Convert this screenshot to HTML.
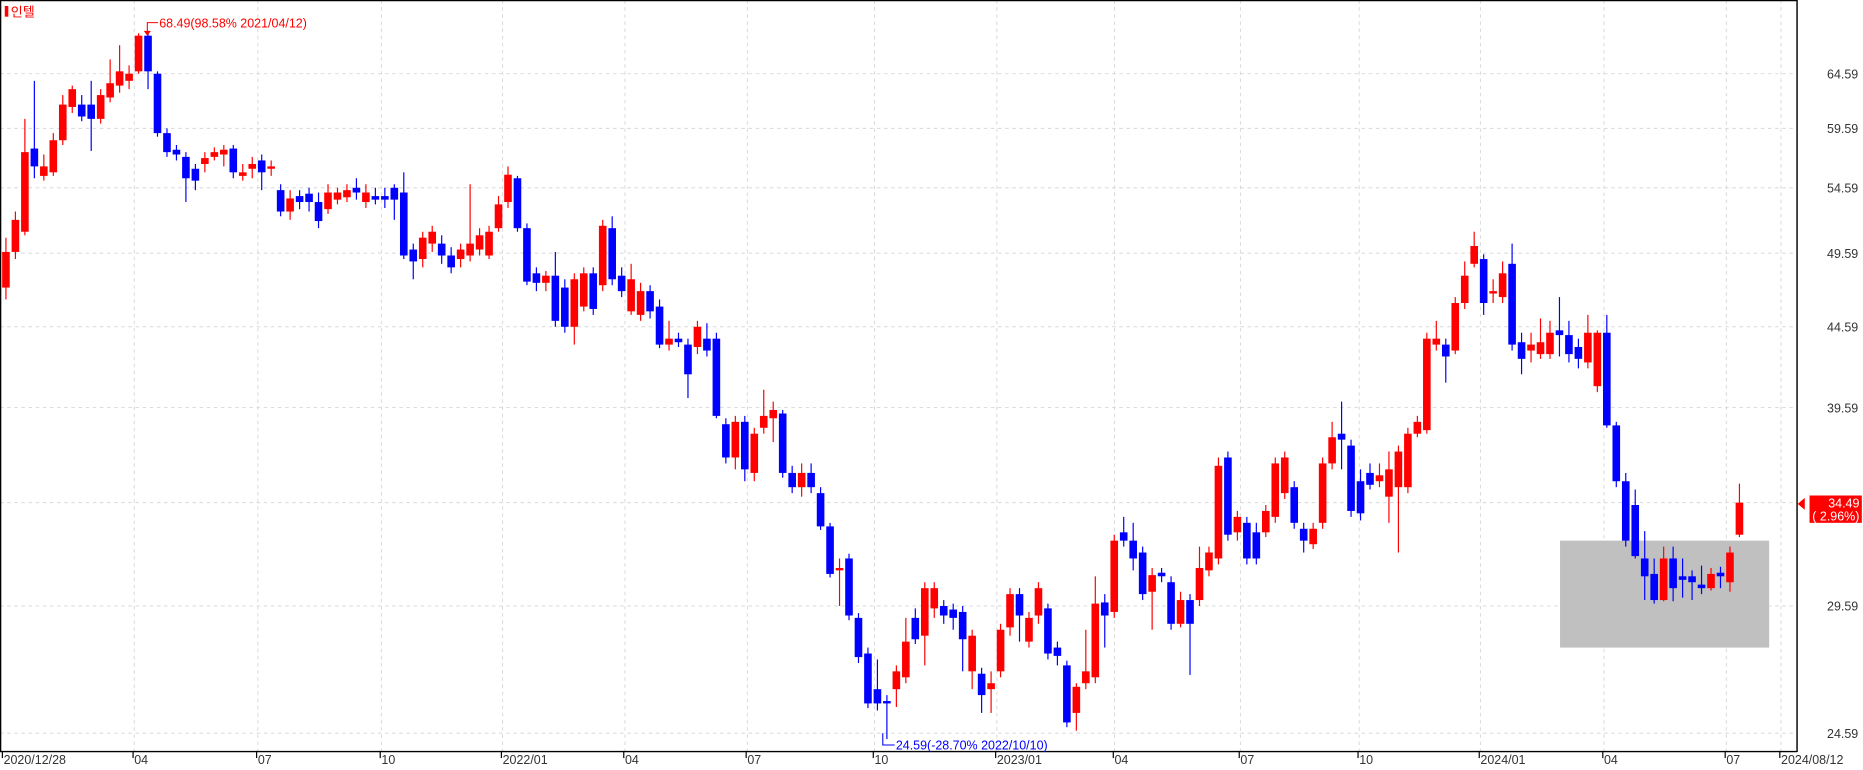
<!DOCTYPE html>
<html><head><meta charset="utf-8">
<style>
html,body{margin:0;padding:0;background:#fff;overflow:hidden}
svg{display:block}
text{font-family:"Liberation Sans","Noto Sans CJK KR",sans-serif}
</style></head><body>
<svg id="c" width="1863" height="770" viewBox="0 0 1568 648" xmlns="http://www.w3.org/2000/svg">
<rect x="0" y="0" width="1568" height="648" fill="#fff"/>
<g id="grid" stroke="#d8d8d8" stroke-width="0.8" stroke-dasharray="3,3"></g>
<rect x="1313" y="455" width="176" height="90" fill="#c0c0c0"/>
<g id="candles"></g>
<line x1="0.5" y1="0" x2="0.5" y2="632" stroke="#000" stroke-width="1.2"/>
<line x1="0" y1="632.5" x2="1512" y2="632.5" stroke="#000" stroke-width="1.2"/>
<line x1="1512.5" y1="0" x2="1512.5" y2="633" stroke="#000" stroke-width="1.2"/>
<line x1="0" y1="0.5" x2="1512" y2="0.5" stroke="#000" stroke-width="1"/>
<g id="labels" font-size="10.5" fill="#333"></g>
<rect x="4" y="5" width="3" height="9" fill="#f00"/>
<text x="9" y="14" font-size="11" fill="#f00">인텔</text>
<polyline points="124,28 124,19 133,19" fill="none" stroke="#f00" stroke-width="0.9"/>
<polygon points="121,26 127,26 124,30" fill="#f00"/>
<text x="134" y="23" font-size="10.5" fill="#f00">68.49(98.58% 2021/04/12)</text>
<polyline points="743,617 743,627 753,627" fill="none" stroke="#00f" stroke-width="0.9"/>
<text x="754" y="631" font-size="10.5" fill="#00f">24.59(-28.70% 2022/10/10)</text>
<polygon points="1513,424 1519,419 1519,429" fill="#f00"/>
<rect x="1523" y="417" width="44" height="23" fill="#f00"/>
<text x="1565" y="427" font-size="10.5" fill="#fff" text-anchor="end">34.49</text>
<text x="1565" y="438" font-size="10.5" fill="#fff" text-anchor="end">( 2.96%)</text>
</svg>
<script>
var NS="http://www.w3.org/2000/svg";
function el(p,t,a,txt){var e=document.createElementNS(NS,t);for(var k in a)e.setAttribute(k,a[k]);if(txt)e.textContent=txt;p.appendChild(e);return e;}
var grid=document.getElementById('grid'),lab=document.getElementById('labels');
var hy=[[62,'64.59'],[108,'59.59'],[158,'54.59'],[213,'49.59'],[275,'44.59'],[343,'39.59'],[423,''],[510,'29.59'],[617,'24.59']];
hy.forEach(function(h){el(grid,'line',{x1:0,y1:h[0],x2:1512,y2:h[0]});if(h[1])el(lab,'text',{x:1564,y:h[0]+4,'text-anchor':'end'},h[1]);});
var vx=[[2,'2020/12/28'],[112,'04'],[216,'07'],[320,'10'],[422,'2022/01'],[525,'04'],[628,'07'],[735,'10'],[838,'2023/01'],[937,'04'],[1043,'07'],[1143,'10'],[1245,'2024/01'],[1349,'04'],[1452,'07'],[1498,'2024/08/12']];
vx.forEach(function(v){if(v[0]>5)el(grid,'line',{x1:v[0]+1,y1:0,x2:v[0]+1,y2:632});
el(lab,'line',{x1:v[0],y1:632,x2:v[0],y2:638,stroke:'#000','stroke-width':1});
el(lab,'text',{x:v[0]+1,y:643},v[1]);});
// [color(1 red,0 blue), bodyTop, bodyBottom, wickTop?, wickBottom?]
var d=[[1,212,242,200,252],[1,185,212,178,218],[1,128,195,100,198],[0,125,140,68,150],[1,140,148,130,152],[1,118,145,112,148],[1,88,118,80,122],[1,75,90,72,95],[0,88,98,80,102],[0,88,100,68,127],[1,80,100,75,104],[1,70,82,50,86],[1,60,72,38,78],[1,62,68,55,75],[1,30,60,28,62],[0,30,60,28,75],
[0,62,112,60,115],[0,112,128,108,132],[0,126,130,122,135],[0,132,150,128,170],[0,142,152,138,160],[1,133,138,128,145],[1,128,132,124,135],[1,126,130,122,140],[0,125,145,122,150],[1,145,148,138,152],[1,138,142,132,150],[0,135,145,130,160],[1,140,142,135,148],[0,160,178,155,182],[1,167,178,160,185],[0,165,170,160,176],[0,163,170,158,178],[0,170,186,162,192],[1,162,176,155,180],[1,162,168,158,172],[1,160,166,155,170],[0,158,162,150,168],[1,162,170,155,175],[0,165,168,158,172],[0,165,168,158,175],[0,158,168,155,185],
[0,162,215,145,218],[0,210,220,205,235],[1,200,218,195,225],[1,195,205,190,212],[0,205,215,198,222],[0,215,225,208,230],[1,210,218,205,225],[1,205,215,155,220],[1,198,210,192,215],[1,195,215,190,218],[1,172,192,165,195],[1,147,170,140,175],[0,150,192,148,195],[0,192,237,188,240],[0,230,238,225,245],[1,232,238,228,245],[0,232,270,212,275],[0,242,275,235,280],[1,235,275,230,290],[1,230,258,225,262],[0,230,260,225,265],[1,190,240,185,245],[0,192,235,182,240],[0,232,245,225,250],[1,235,262,222,265],[1,245,265,238,270],[0,245,262,240,268],[0,258,290,252,293],[1,285,290,270,295],[0,285,288,280,292],[0,290,315,285,335],[1,275,292,270,298],[0,285,295,272,300],[0,285,350,280,352],
[0,357,385,352,390],[1,355,385,350,395],[0,355,395,350,405],[1,365,398,360,405],[1,350,360,328,365],[1,345,352,338,372],[0,348,398,345,402],[0,398,410,392,415],[1,398,410,390,418],[0,398,410,390,415],[0,415,443,410,446],[0,443,483,440,486],[1,478,480,470,510],[0,470,518,466,522],[0,520,553,516,558],[0,550,592,545,596],[0,580,592,555,598],[0,590,592,585,622],
[1,565,580,560,595],[1,540,570,520,575],[0,520,538,512,542],[1,495,535,490,560],[1,495,512,490,520],[0,510,518,505,525],[0,513,520,508,530],[0,515,538,510,565],[1,535,565,530,580],[0,567,585,562,600],[1,575,580,565,600],[1,530,565,525,570],[1,500,528,495,535],[0,500,518,495,540],[1,520,540,515,545],[1,495,518,490,525],[0,512,550,508,555],[0,545,552,540,560],[0,560,608,556,612],[1,578,600,575,615],[1,565,575,530,580],[1,508,570,485,575],[0,507,518,500,545],[1,455,515,450,520],[0,448,455,435,460],[0,455,470,440,480],[0,465,500,460,505],[1,484,498,478,530],[0,482,485,478,490],[0,490,525,485,530],[1,505,525,498,528],[0,505,525,500,568],[1,478,505,460,510],[1,465,480,460,485],[1,392,470,385,475],[0,385,450,380,455],[1,435,448,430,455],[0,440,470,435,475],[0,448,470,440,475],[1,430,448,425,452],[1,390,435,385,440],[1,385,415,380,420],[0,410,440,405,445],[0,445,455,440,465],[1,445,458,440,462],[1,390,440,385,445],[1,368,390,355,395],[0,365,370,338,395],[0,375,430,370,435],[0,405,432,395,438],[0,398,408,390,412],[1,400,405,390,410],[1,395,418,380,440],[1,380,410,375,465],[1,365,410,360,415],[1,355,365,350,368],[1,285,362,280,365],[1,285,290,270,295],[0,290,300,285,322],[1,255,295,250,298],[1,232,255,220,260],[1,207,222,195,225],[0,218,255,214,265],[1,245,247,235,255],[1,230,250,220,255],[0,222,290,205,295],[0,288,302,280,315],[1,290,295,280,305],[1,288,298,268,302],[1,280,298,270,302],[0,278,282,250,300],[0,282,298,270,305],[0,292,302,285,310],[1,280,305,265,310],[1,280,325,278,330],[0,280,358,265,360],[0,358,405,355,410],[0,405,455,398,460],[0,425,468,412,470],[0,470,485,447,505],[0,483,505,470,508],[1,470,505,460,506],[0,470,495,460,506],[0,485,488,470,503],[0,485,490,480,505],[0,492,495,476,500],[1,483,495,478,497],[0,482,485,477,495],[1,465,490,460,498],[1,423,450,407,452]];
var g=document.getElementById('candles');var n=d.length;
d.forEach(function(c,i){var x=5+i*(1464-5)/(n-1);var col=c[0]?'#f00':'#00f';
el(g,'line',{x1:x,y1:c[3],x2:x,y2:c[4],stroke:col,'stroke-width':1});
var h=Math.max(c[2]-c[1],1.5);el(g,'rect',{x:x-3.2,y:c[1],width:6.4,height:h,fill:col});});
</script>
</body></html>
